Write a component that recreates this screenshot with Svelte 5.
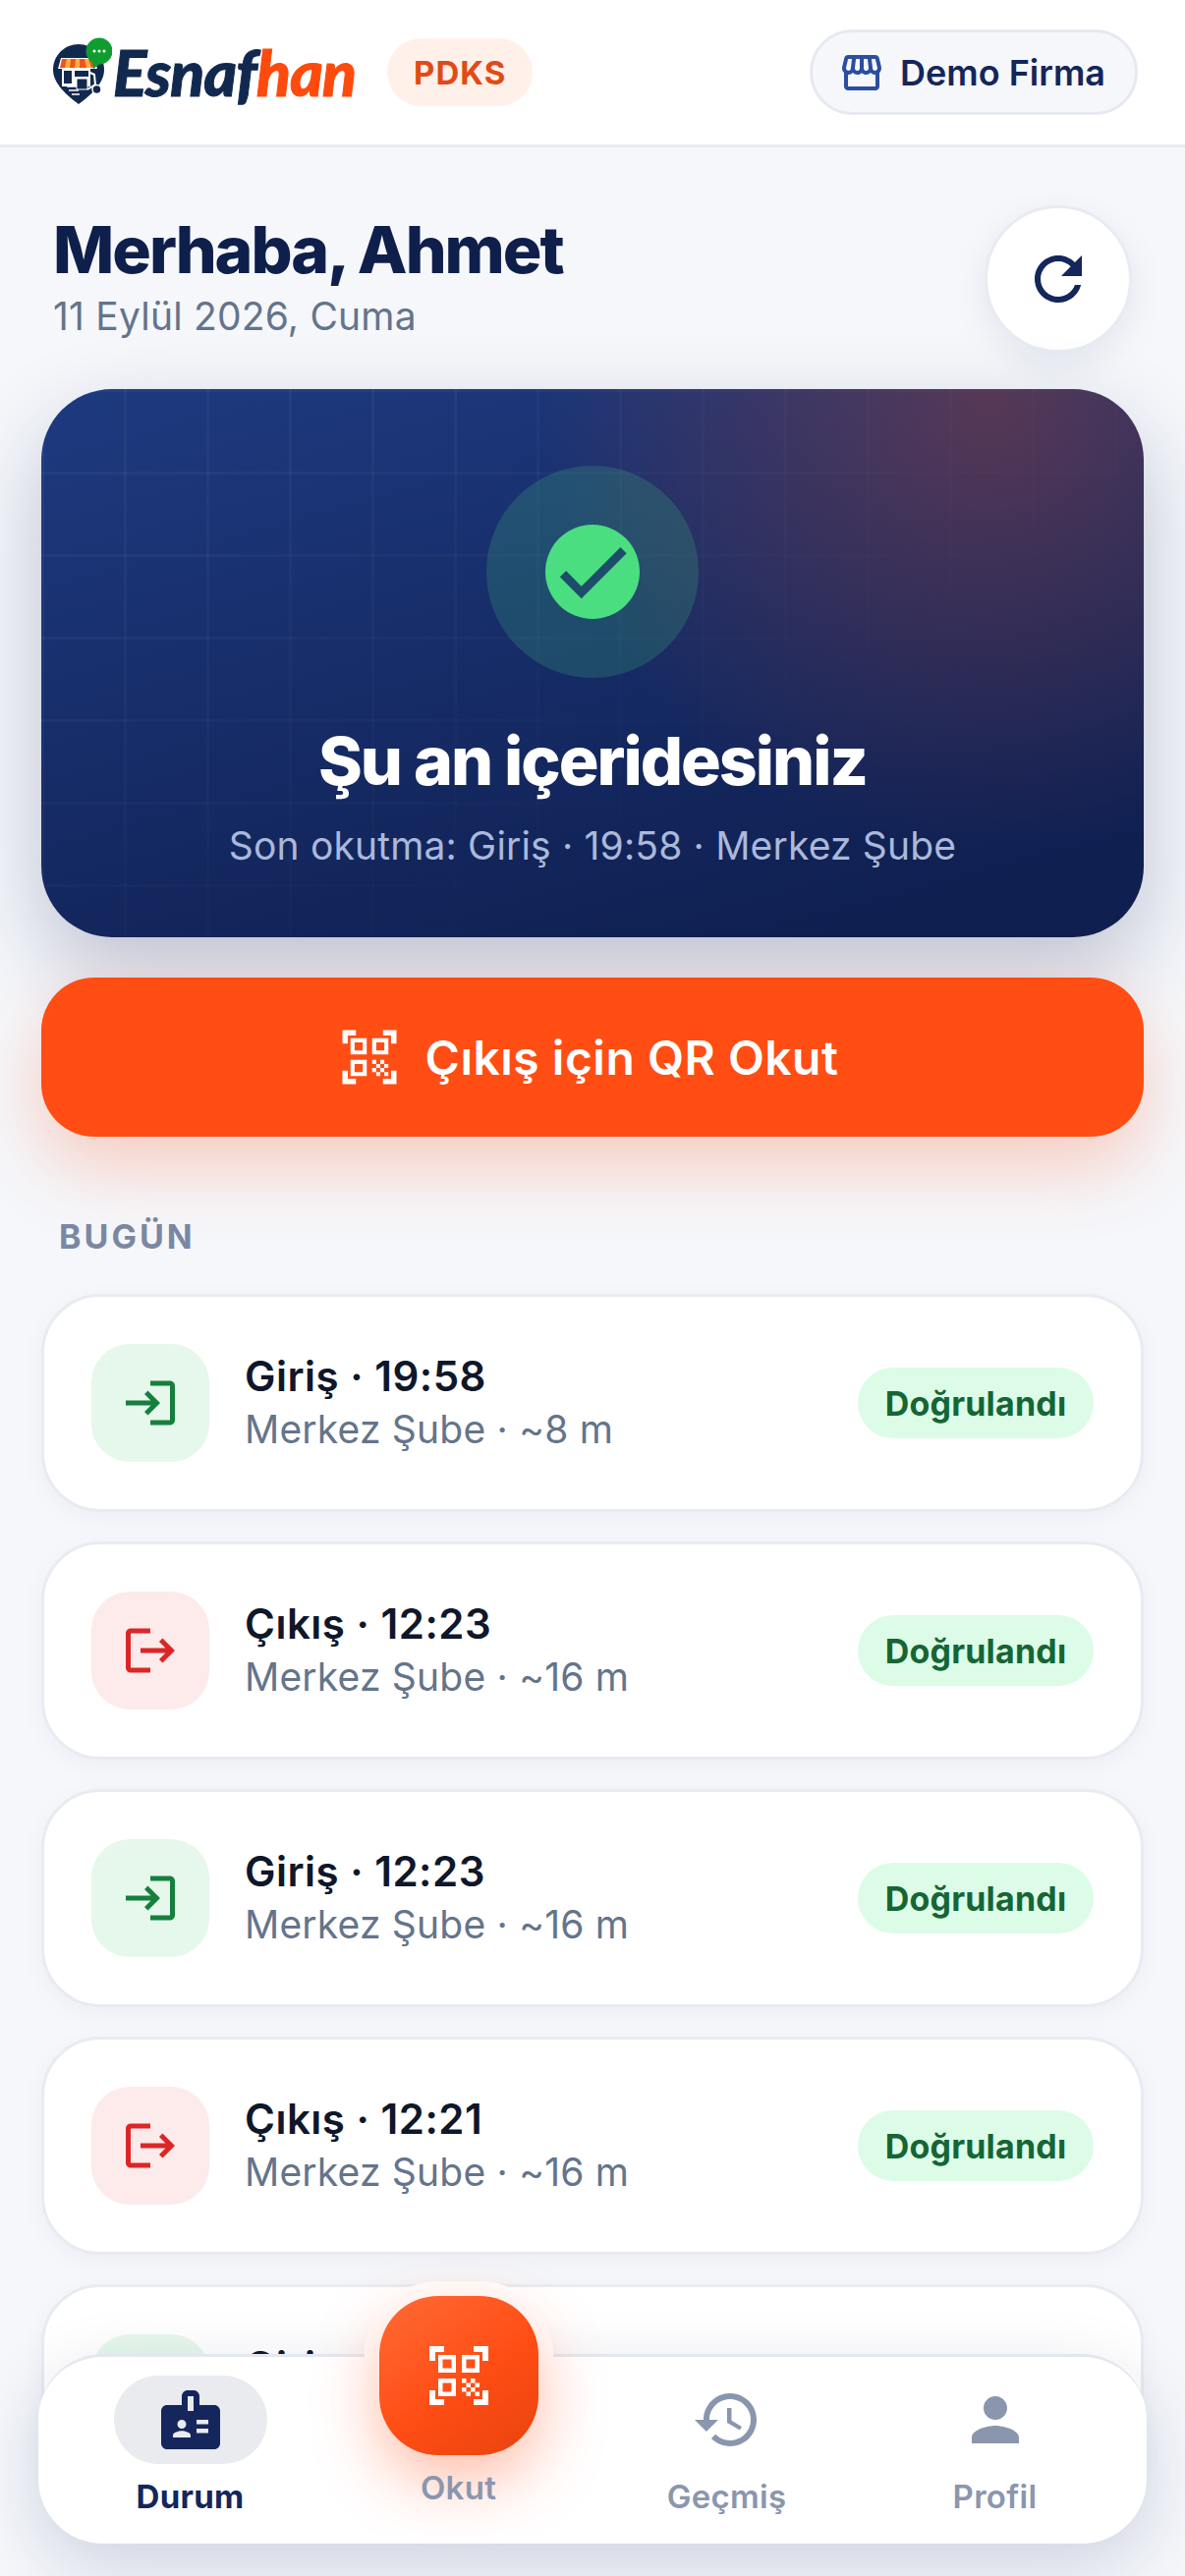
<script>
  const scans = [
    { type: "in", label: "Giriş", time: "19:58", dist: "~8 m" },
    { type: "out", label: "Çıkış", time: "12:23", dist: "~16 m" },
    { type: "in", label: "Giriş", time: "12:23", dist: "~16 m" },
    { type: "out", label: "Çıkış", time: "12:21", dist: "~16 m" },
    { type: "in", label: "Giriş", time: "12:21", dist: "~16 m" }
  ];

  const qrPath =
    "M9.5 6.5v3h-3v-3h3M11 5H5v6h6V5zm-1.5 9.5v3h-3v-3h3M11 13H5v6h6v-6zm6.5-6.5v3h-3v-3h3M19 5h-6v6h6V5zm-6 8h1.5v1.5H13V13zm1.5 1.5H16V16h-1.5v-1.5zM16 13h1.5v1.5H16V13zm-3 3h1.5v1.5H13V16zm1.5 1.5H16V19h-1.5v-1.5zM16 16h1.5v1.5H16V16zm1.5-1.5H19V16h-1.5v-1.5zm0 3H19V19h-1.5v-1.5zM22 7h-2V4h-3V2h5v5zm0 15v-5h-2v3h-3v2h5zM2 22h5v-2H4v-3H2v5zM2 2v5h2V4h3V2H2z";
</script>

<div class="screen">
  <header class="topbar">
    <div class="brand">
      <svg class="logo-mark" viewBox="0 0 60 70" width="60" height="70">
        <path d="M26 7C11.5 7 0 18.500 0 33c0 14 14 26 26 35 12-9 26-21 26-35C52 18.500 40.500 7 26 7z" fill="#12294f" />
        <path d="M8 21h34l3 11H5z" fill="#fff" />
        <path d="M9 22h31l3 9H7z" fill="#f4511e" />
        <path d="M14 22h4l-1 9h-5zM23 22h4v9h-5zM32 22h4l3 9h-5z" fill="#ffb13d" />
        <rect x="9" y="32" width="29" height="18" fill="#fff" />
        <rect x="11" y="34" width="8" height="13" fill="#12294f" />
        <rect x="22" y="34" width="14" height="6" fill="#12294f" />
        <path d="M14 50h12M16 54h10M19 58h8" stroke="#fff" stroke-width="1.500" />
        <path d="M24 42h11v11H24z" fill="#12294f" stroke="#fff" stroke-width="1" />
        <path d="M38 36l4 2 1 10-8 5" stroke="#fff" stroke-width="2" fill="none" />
        <circle cx="44.500" cy="53" r="4.500" fill="#12294f" stroke="#fff" stroke-width="1.500" />
        <circle cx="47" cy="14" r="13.500" fill="#0f9d2f" />
        <path d="M40 24l1 8 8-6z" fill="#0f9d2f" />
        <circle cx="42" cy="14" r="1.500" fill="#fff" />
        <circle cx="47" cy="14" r="1.500" fill="#fff" />
        <circle cx="52" cy="14" r="1.500" fill="#fff" />
      </svg>
      <span class="wordmark">Esnaf<span class="wordmark-accent">han</span></span>
      <span class="pdks">PDKS</span>
    </div>
    <div class="company">
      <svg viewBox="0 0 24 24" width="48" height="48"><path fill="#2b4ea0" d="M21.900 8.890l-1.050-4.370c-.22-.9-1-1.520-1.910-1.520H5.050c-.9 0-1.690.63-1.900 1.520L2.100 8.890c-.24 1.020-.02 2.060.62 2.880.08.11.19.19.28.29V19c0 1.100.9 2 2 2h14c1.100 0 2-.9 2-2v-6.940c.09-.09.2-.18.28-.28.64-.82.87-1.870.62-2.890zm-2.990-3.900l1.050 4.370c.1.42.01.84-.25 1.170-.14.18-.44.47-.94.47-.61 0-1.140-.49-1.210-1.140L16.980 5l1.930-.01zM13 5h1.960l.54 4.520c.05.39-.07.78-.33 1.070-.22.26-.54.41-.95.41-.67 0-1.220-.59-1.220-1.310V5zM8.490 9.520L9.040 5H11v4.690c0 .72-.55 1.310-1.290 1.310-.34 0-.65-.15-.89-.41-.25-.29-.37-.68-.33-1.070zm-4.450-.16L5.050 5h1.970l-.58 4.860c-.08.65-.6 1.140-1.210 1.140-.49 0-.8-.29-.93-.47-.27-.32-.36-.75-.26-1.170zM5 19v-6.030c.08.01.15.03.23.03.87 0 1.660-.36 2.240-.95.6.6 1.400.95 2.310.95.87 0 1.650-.36 2.230-.93.59.57 1.390.93 2.290.93.84 0 1.640-.35 2.240-.95.58.59 1.370.95 2.240.95.08 0 .15-.02.23-.03V19H5z" /></svg>
      <span>Demo Firma</span>
    </div>
  </header>

  <main class="content">
    <section class="greeting">
      <div>
        <h1>Merhaba, Ahmet</h1>
        <p>11 Eylül 2026, Cuma</p>
      </div>
      <button class="refresh" aria-label="Yenile">
        <svg viewBox="0 0 24 24" width="72" height="72"><path fill="#14265c" d="M17.650 6.350C16.200 4.900 14.210 4 12 4c-4.420 0-7.990 3.580-7.990 8s3.570 8 7.990 8c3.730 0 6.840-2.550 7.730-6h-2.080c-.82 2.330-3.040 4-5.650 4-3.310 0-6-2.690-6-6s2.690-6 6-6c1.660 0 3.140.69 4.220 1.780L13 11h7V4l-2.350 2.350z" /></svg>
      </button>
    </section>

    <section class="hero">
      <div class="ring">
        <div class="dot">
          <svg viewBox="0 0 24 24" width="90" height="90"><path fill="#1e4d6b" stroke="#1e4d6b" stroke-width="0.35" d="M9 16.170L4.830 12l-1.420 1.410L9 19 21 7l-1.410-1.410z" /></svg>
        </div>
      </div>
      <h2>Şu an içeridesiniz</h2>
      <p>Son okutma: Giriş · 19:58 · Merkez Şube</p>
    </section>

    <button class="cta">
      <svg viewBox="0 0 24 24" width="66" height="66"><path fill="#fff" d={qrPath} /></svg>
      <span>Çıkış için QR Okut</span>
    </button>

    <div class="section-label">BUGÜN</div>

    <div class="scan-list">
      {#each scans as scan}
        <div class="scan">
          <div class="scan-icon {scan.type}">
            {#if scan.type === "in"}
              <svg viewBox="0 0 24 24" width="60" height="60"><path fill="#15803d" d="M11 7L9.600 8.400l2.600 2.600H2v2h10.200l-2.600 2.600L11 17l5-5-5-5zm9 12h-8v2h8c1.100 0 2-.9 2-2V5c0-1.100-.9-2-2-2h-8v2h8v14z" /></svg>
            {:else}
              <svg viewBox="0 0 24 24" width="60" height="60"><path fill="#dc2626" d="M17 7l-1.410 1.410L18.170 11H8v2h10.170l-2.580 2.580L17 17l5-5zM4 5h8V3H4c-1.100 0-2 .9-2 2v14c0 1.100.9 2 2 2h8v-2H4V5z" /></svg>
            {/if}
          </div>
          <div class="scan-text">
            <div class="scan-title">{scan.label} · {scan.time}</div>
            <div class="scan-sub">Merkez Şube · {scan.dist}</div>
          </div>
          <span class="badge">Doğrulandı</span>
        </div>
      {/each}
    </div>
  </main>

  <nav class="tabbar">
    <div class="tab active">
      <div class="tab-icon">
        <svg viewBox="0 0 24 24" width="72" height="72"><path fill="#14265c" d="M20 7h-5V4c0-1.100-.9-2-2-2h-2c-1.100 0-2 .9-2 2v3H4c-1.100 0-2 .9-2 2v11c0 1.100.9 2 2 2h16c1.100 0 2-.9 2-2V9c0-1.100-.9-2-2-2zM9 12c.83 0 1.500.67 1.500 1.500S9.830 15 9 15s-1.500-.67-1.500-1.500S8.170 12 9 12zm3 6H6v-.75c0-1 2-1.500 3-1.500s3 .5 3 1.500V18zm1-9h-2V4h2v5zm5 7.500h-4V15h4v1.500zm0-3h-4V12h4v1.500z" /></svg>
      </div>
      <span>Durum</span>
    </div>
    <div class="tab">
      <div class="fab">
        <svg viewBox="0 0 24 24" width="72" height="72"><path fill="#fff" d={qrPath} /></svg>
      </div>
      <span>Okut</span>
    </div>
    <div class="tab">
      <div class="tab-icon">
        <svg viewBox="0 0 24 24" width="72" height="72"><path fill="#8a96ae" d="M13 3c-4.970 0-9 4.030-9 9H1l3.890 3.890.07.14L9 12H6c0-3.870 3.130-7 7-7s7 3.130 7 7-3.130 7-7 7c-1.930 0-3.680-.79-4.940-2.060l-1.420 1.420C8.270 19.990 10.510 21 13 21c4.970 0 9-4.030 9-9s-4.030-9-9-9zm-1 5v5l4.280 2.540.72-1.210-3.500-2.080V8H12z" /></svg>
      </div>
      <span>Geçmiş</span>
    </div>
    <div class="tab">
      <div class="tab-icon">
        <svg viewBox="0 0 24 24" width="72" height="72"><path fill="#8a96ae" d="M12 12c2.210 0 4-1.790 4-4s-1.790-4-4-4-4 1.790-4 4 1.790 4 4 4zm0 2c-2.670 0-8 1.340-8 4v2h16v-2c0-2.660-5.330-4-8-4z" /></svg>
      </div>
      <span>Profil</span>
    </div>
  </nav>
</div>

<style>
  :global(body) {
    margin: 0;
    background: #f5f7fb;
  }

  .screen {
    position: relative;
    height: 2622px;
    overflow: hidden;
    background: #f5f7fb;
    font-family: Inter, "Noto Sans", sans-serif;
    color: #14265c;
  }

  h1,
  h2,
  p {
    margin: 0;
  }

  button {
    border: 0;
    padding: 0;
    font: inherit;
  }

  .topbar {
    box-sizing: border-box;
    height: 150px;
    padding: 0 48px 0 54px;
    display: flex;
    align-items: center;
    justify-content: space-between;
    background: #fff;
    border-bottom: 3px solid #e8ebf1;
  }

  .brand {
    display: flex;
    align-items: center;
  }

  .logo-mark {
    margin-top: -2px;
    flex: none;
  }

  .wordmark {
    margin-left: 1px;
    font-family: Lato, "Open Sans", sans-serif;
    font-size: 64px;
    font-weight: 900;
    font-style: italic;
    letter-spacing: -0.8px;
    line-height: 70px;
    color: #12294f;
    -webkit-text-stroke: 1px currentColor;
  }

  .wordmark-accent {
    color: #ff4a0d;
  }

  .pdks {
    margin-left: 32px;
    width: 148px;
    height: 69px;
    display: flex;
    align-items: center;
    justify-content: center;
    border-radius: 35px;
    background: #fff1ea;
    color: #e24a16;
    font-size: 33px;
    font-weight: 700;
    letter-spacing: 1px;
  }

  .company {
    box-sizing: border-box;
    height: 87px;
    padding: 0 30px 0 26px;
    display: flex;
    align-items: center;
    gap: 15px;
    border: 3px solid #e6e9f0;
    border-radius: 44px;
    background: #f5f7fb;
    font-size: 36px;
    font-weight: 600;
  }

  .content {
    padding: 0 42px;
  }

  .greeting {
    padding: 59px 12px 0;
    margin-bottom: 37px;
    display: flex;
    align-items: flex-start;
    justify-content: space-between;
  }

  .greeting h1 {
    margin-top: 7px;
    font-size: 66px;
    font-weight: 800;
    line-height: 76px;
    letter-spacing: -2px;
    color: #0f1f4b;
  }

  .greeting p {
    margin-top: 5px;
    font-size: 39px;
    line-height: 50px;
    letter-spacing: 0.2px;
    color: #64748b;
  }

  .refresh {
    box-sizing: border-box;
    width: 150px;
    height: 150px;
    display: flex;
    align-items: center;
    justify-content: center;
    border: 3px solid #e8ebf1;
    border-radius: 50%;
    background: #fff;
    box-shadow: 0 12px 36px rgba(15, 31, 80, 0.08);
  }

  .hero {
    position: relative;
    overflow: hidden;
    box-sizing: border-box;
    height: 558px;
    padding-top: 78px;
    display: flex;
    flex-direction: column;
    align-items: center;
    border-radius: 72px;
    background:
      radial-gradient(circle 460px at 86% 2%, rgba(255, 77, 20, 0.27), transparent),
      linear-gradient(165deg, #1e3a80, #0f1f50 90%);
    box-shadow: 0 36px 90px rgba(15, 31, 80, 0.24);
    text-align: center;
  }

  .hero::before {
    content: "";
    position: absolute;
    inset: 0;
    background-image:
      linear-gradient(rgba(255, 255, 255, 0.035) 3px, transparent 3px),
      linear-gradient(90deg, rgba(255, 255, 255, 0.035) 3px, transparent 3px);
    background-size: 84px 84px;
    mask-image: linear-gradient(145deg, #000 20%, transparent 72%);
  }

  .ring {
    position: relative;
    width: 216px;
    height: 216px;
    display: flex;
    align-items: center;
    justify-content: center;
    border-radius: 50%;
    background: rgba(74, 222, 128, 0.18);
  }

  .dot {
    width: 96px;
    height: 96px;
    display: flex;
    align-items: center;
    justify-content: center;
    border-radius: 50%;
    background: #4ade80;
  }

  .hero h2 {
    position: relative;
    margin-top: 42px;
    font-size: 68px;
    font-weight: 800;
    line-height: 84px;
    letter-spacing: -2px;
    color: #fff;
  }

  .hero p {
    position: relative;
    margin-top: 20px;
    font-size: 39px;
    line-height: 50px;
    letter-spacing: 0.17px;
    color: #aab9da;
  }

  .cta {
    position: relative;
    width: 100%;
    height: 162px;
    margin-top: 41px;
    padding-right: 10px;
    display: flex;
    align-items: center;
    justify-content: center;
    gap: 24px;
    border-radius: 54px;
    background: #ff4d14;
    box-shadow: 0 30px 72px rgba(255, 77, 20, 0.26);
    color: #fff;
    font-family: inherit;
    font-size: 48px;
    font-weight: 600;
    letter-spacing: 0.5px;
  }

  .section-label {
    margin-top: 84px;
    padding-left: 18px;
    font-size: 34px;
    font-weight: 700;
    line-height: 36px;
    letter-spacing: 3px;
    color: #7b88a3;
  }

  .scan-list {
    margin-top: 40px;
    display: flex;
    flex-direction: column;
    gap: 30px;
  }

  .scan {
    box-sizing: border-box;
    height: 222px;
    padding: 0 48px;
    display: flex;
    align-items: center;
    gap: 36px;
    border: 3px solid #e8ebf1;
    border-radius: 60px;
    background: #fff;
    box-shadow: 0 6px 24px rgba(15, 31, 80, 0.04);
  }

  .scan-icon {
    flex: none;
    width: 120px;
    height: 120px;
    display: flex;
    align-items: center;
    justify-content: center;
    border-radius: 39px;
  }

  .scan-icon.in {
    background: #e6f7ec;
  }

  .scan-icon.out {
    background: #fdeaea;
  }

  .scan-text {
    flex: 1;
    min-width: 0;
  }

  .scan-title {
    font-size: 42px;
    font-weight: 600;
    line-height: 52px;
    letter-spacing: 0.5px;
    color: #0f172a;
  }

  .scan-sub {
    margin-top: 2px;
    font-size: 39px;
    line-height: 52px;
    letter-spacing: 0.2px;
    color: #64748b;
  }

  .badge {
    flex: none;
    width: 240px;
    height: 72px;
    display: flex;
    align-items: center;
    justify-content: center;
    border-radius: 36px;
    background: #dcfce7;
    color: #166534;
    font-size: 34px;
    font-weight: 700;
    letter-spacing: 0.2px;
  }

  .tabbar {
    position: absolute;
    left: 39px;
    right: 39px;
    bottom: 33px;
    box-sizing: border-box;
    height: 193px;
    padding: 19px 18px 0;
    display: grid;
    grid-template-columns: repeat(4, 1fr);
    border-top: 3px solid #e4e7ef;
    border-radius: 66px;
    background: #fff;
    box-shadow: 0 24px 72px rgba(15, 31, 80, 0.16);
  }

  .tab {
    display: flex;
    flex-direction: column;
    align-items: center;
    font-size: 33px;
    font-weight: 600;
    line-height: 42px;
    letter-spacing: 0.3px;
    color: #8a96ae;
  }

  .tab span {
    position: relative;
    margin-top: 12px;
  }

  .tab-icon {
    width: 156px;
    height: 90px;
    display: flex;
    align-items: center;
    justify-content: center;
    border-radius: 45px;
  }

  .tab.active {
    font-weight: 700;
    color: #14265c;
  }

  .tab.active .tab-icon {
    background: #e9ebef;
  }

  .fab {
    width: 162px;
    height: 162px;
    margin-top: -81px;
    display: flex;
    align-items: center;
    justify-content: center;
    border-radius: 60px;
    background: linear-gradient(145deg, #ff6a35, #ff4d14 55%, #e8430f);
    box-shadow:
      0 24px 66px rgba(255, 77, 20, 0.38),
      0 0 0 15px #fff;
  }
</style>
